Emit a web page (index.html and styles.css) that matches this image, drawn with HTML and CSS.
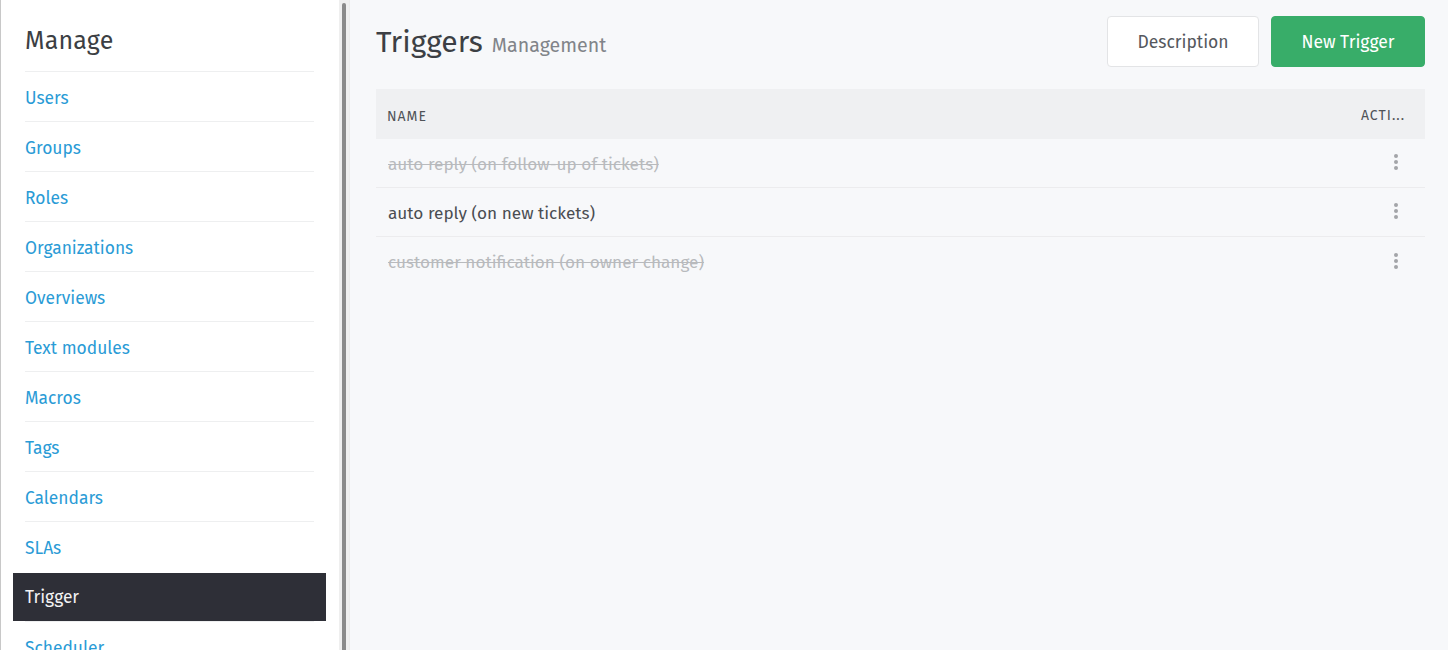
FILE: index.html
```html
<!DOCTYPE html>
<html>
<head>
<meta charset="utf-8">
<link rel="stylesheet" href="styles.css">
</head>
<body>
<div class="app">
  <aside class="sidebar">
    <div class="side-content">
      <h2 class="side-title">Manage</h2>
      <nav class="side-nav">
        <a class="side-item">Users</a>
        <a class="side-item">Groups</a>
        <a class="side-item">Roles</a>
        <a class="side-item">Organizations</a>
        <a class="side-item">Overviews</a>
        <a class="side-item">Text modules</a>
        <a class="side-item">Macros</a>
        <a class="side-item">Tags</a>
        <a class="side-item">Calendars</a>
        <a class="side-item">SLAs</a>
        <a class="side-item active">Trigger</a>
        <a class="side-item">Scheduler</a>
      </nav>
    </div>
    <div class="scrollbar"><div class="thumb"></div></div>
  </aside>
  <main class="main">
    <header class="page-head">
      <h1 class="page-title">Triggers <small>Management</small></h1>
      <div class="actions">
        <button class="btn btn-default">Description</button>
        <button class="btn btn-primary">New Trigger</button>
      </div>
    </header>
    <div class="table">
      <div class="row head">
        <div class="cell name">NAME</div>
        <div class="cell act">ACTI...</div>
      </div>
      <div class="row">
        <div class="cell name inactive">auto reply (on follow-up of tickets)</div>
        <div class="cell act"><span class="dots"><i></i><i></i><i></i></span></div>
      </div>
      <div class="row">
        <div class="cell name">auto reply (on new tickets)</div>
        <div class="cell act"><span class="dots"><i></i><i></i><i></i></span></div>
      </div>
      <div class="row">
        <div class="cell name inactive">customer notification (on owner change)</div>
        <div class="cell act"><span class="dots"><i></i><i></i><i></i></span></div>
      </div>
    </div>
  </main>
</div>
</body>
</html>
```
FILE: styles.css
```css
* { box-sizing: border-box; }
html, body { margin: 0; height: 100%; }
body {
  font-family: "Fira Sans", "Open Sans", "Noto Sans", sans-serif;
  color: #4a4d52;
  background: #f7f8fa;
  overflow: hidden;
}
.app { display: flex; height: 650px; }
.sidebar {
  width: 350px;
  flex: none;
  display: flex;
  background: #fff;
  border-left: 1px solid #c8c8c8;
  border-right: 1px solid #ebebeb;
  height: 650px;
}
.side-content {
  flex: 1;
  padding: 0 25px 0 24px;
  overflow: hidden;
}
.scrollbar {
  width: 10px;
  flex: none;
  background: #efefef;
  padding: 3px 3px 0 3px;
}
.thumb {
  height: 660px;
  background: #8a8a8a;
  border-radius: 2px;
}
.side-title {
  margin: 0;
  padding-top: 26px;
  height: 71px;
  font-size: 25px;
  font-weight: 400;
  color: #3c3f44;
  letter-spacing: 0.2px;
}
.side-nav { display: flex; flex-direction: column; }
.side-item {
  display: flex;
  align-items: center;
  height: 50px;
  padding-top: 3px;
  border-top: 1px solid #eeeff0;
  color: #2a9bd6;
  font-size: 17.4px;
  cursor: pointer;
}
.side-item.active {
  background: #2e2f37;
  color: #f2f2f2;
  margin: 0 -12px;
  padding-left: 12px;
  padding-top: 1px;
  border-top: 2px solid #fff;
  height: 50px;
}
.main {
  flex: 1;
  padding: 16px 23px 0 26px;
}
.page-head {
  display: flex;
  justify-content: space-between;
  align-items: flex-start;
}
.page-title {
  margin: 8px 0 0 0;
  font-size: 30px;
  font-weight: 400;
  color: #3c3f44;
}
.page-title small {
  font-size: 19.6px;
  color: #818489;
  margin-left: 1px;
}
.actions { display: flex; gap: 12px; }
.btn {
  height: 51px;
  padding: 2px 0 0 0;
  font: inherit;
  font-size: 17.5px;
  border-radius: 4px;
  border: 1px solid #e3e4e6;
  background: #fff;
  color: #55585d;
}
.btn-default { width: 152px; }
.btn-primary {
  background: #38ad69;
  border-color: #38ad69;
  color: #fff;
  width: 154px;
}
.table { margin-top: 22px; }
.row {
  display: flex;
  align-items: center;
  height: 49px;
  border-bottom: 1px solid #ececee;
}
.row:last-child { border-bottom: none; }
.row.head {
  background: #eff0f2;
  border-bottom: none;
  height: 50px;
  padding-top: 2px;
}
.cell.name { flex: 1; padding-left: 12px; font-size: 17.2px; padding-top: 2px; }
.head .cell { font-size: 14px; letter-spacing: 1px; color: #505358; }
.head .cell.name { padding-left: 11px; }
.cell.act { width: 90px; display: flex; justify-content: flex-end; padding-right: 20px; }
.cell.inactive { color: #b8babd; text-decoration: line-through; }
.dots { display: flex; flex-direction: column; gap: 2px; margin-right: 7px; margin-bottom: 2px; }
.dots i { width: 4px; height: 4px; border-radius: 50%; background: #a3a5a8; }
```
